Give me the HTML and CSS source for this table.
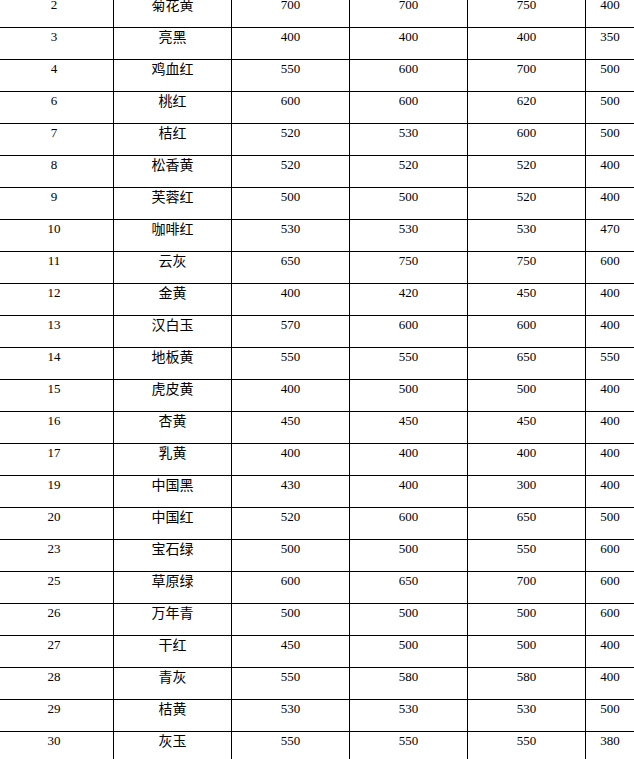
FILE: index.html
```html
<!DOCTYPE html>
<html>
<head>
<meta charset="utf-8">
<link rel="stylesheet" href="styles.css">
</head>
<body>
<table class="price">
<colgroup>
<col class="c1"><col class="c2"><col class="c3"><col class="c4"><col class="c5"><col class="c6">
</colgroup>
<tbody>
<tr><td>2</td><td class="nm">菊花黄</td><td>700</td><td>700</td><td>750</td><td>400</td></tr>
<tr><td>3</td><td class="nm">亮黑</td><td>400</td><td>400</td><td>400</td><td>350</td></tr>
<tr><td>4</td><td class="nm">鸡血红</td><td>550</td><td>600</td><td>700</td><td>500</td></tr>
<tr><td>6</td><td class="nm">桃红</td><td>600</td><td>600</td><td>620</td><td>500</td></tr>
<tr><td>7</td><td class="nm">桔红</td><td>520</td><td>530</td><td>600</td><td>500</td></tr>
<tr><td>8</td><td class="nm">松香黄</td><td>520</td><td>520</td><td>520</td><td>400</td></tr>
<tr><td>9</td><td class="nm">芙蓉红</td><td>500</td><td>500</td><td>520</td><td>400</td></tr>
<tr><td>10</td><td class="nm">咖啡红</td><td>530</td><td>530</td><td>530</td><td>470</td></tr>
<tr><td>11</td><td class="nm">云灰</td><td>650</td><td>750</td><td>750</td><td>600</td></tr>
<tr><td>12</td><td class="nm">金黄</td><td>400</td><td>420</td><td>450</td><td>400</td></tr>
<tr><td>13</td><td class="nm">汉白玉</td><td>570</td><td>600</td><td>600</td><td>400</td></tr>
<tr><td>14</td><td class="nm">地板黄</td><td>550</td><td>550</td><td>650</td><td>550</td></tr>
<tr><td>15</td><td class="nm">虎皮黄</td><td>400</td><td>500</td><td>500</td><td>400</td></tr>
<tr><td>16</td><td class="nm">杏黄</td><td>450</td><td>450</td><td>450</td><td>400</td></tr>
<tr><td>17</td><td class="nm">乳黄</td><td>400</td><td>400</td><td>400</td><td>400</td></tr>
<tr><td>19</td><td class="nm">中国黑</td><td>430</td><td>400</td><td>300</td><td>400</td></tr>
<tr><td>20</td><td class="nm">中国红</td><td>520</td><td>600</td><td>650</td><td>500</td></tr>
<tr><td>23</td><td class="nm">宝石绿</td><td>500</td><td>500</td><td>550</td><td>600</td></tr>
<tr><td>25</td><td class="nm">草原绿</td><td>600</td><td>650</td><td>700</td><td>600</td></tr>
<tr><td>26</td><td class="nm">万年青</td><td>500</td><td>500</td><td>500</td><td>600</td></tr>
<tr><td>27</td><td class="nm">干红</td><td>450</td><td>500</td><td>500</td><td>400</td></tr>
<tr><td>28</td><td class="nm">青灰</td><td>550</td><td>580</td><td>580</td><td>400</td></tr>
<tr><td>29</td><td class="nm">桔黄</td><td>530</td><td>530</td><td>530</td><td>500</td></tr>
<tr><td>30</td><td class="nm">灰玉</td><td>550</td><td>550</td><td>550</td><td>380</td></tr>
</tbody>
</table>
</body>
</html>
```
FILE: styles.css
```css
html, body {
  margin: 0;
  padding: 0;
  background: #ffffff;
  overflow: hidden;
}
.price {
  border-collapse: collapse;
  table-layout: fixed;
  width: 640px;
  margin: -5px 0 0 -6px;
  font-family: "Liberation Serif", "Noto Sans CJK SC", serif;
  font-size: 13px;
  color: #000000;
}
.c1 { width: 119px; }
.c2 { width: 118px; }
.c3 { width: 118px; }
.c4 { width: 118px; }
.c5 { width: 118px; }
.c6 { width: 49px; }
.price td {
  border: 1px solid #000000;
  height: 32px;
  padding: 1px 0 0 0;
  box-sizing: border-box;
  text-align: center;
  vertical-align: top;
  line-height: 16px;
  white-space: nowrap;
  overflow: hidden;
}
.price td.nm {
  font-family: "Noto Sans CJK SC", sans-serif;
  font-size: 14px;
  padding-top: 0;
}
```
